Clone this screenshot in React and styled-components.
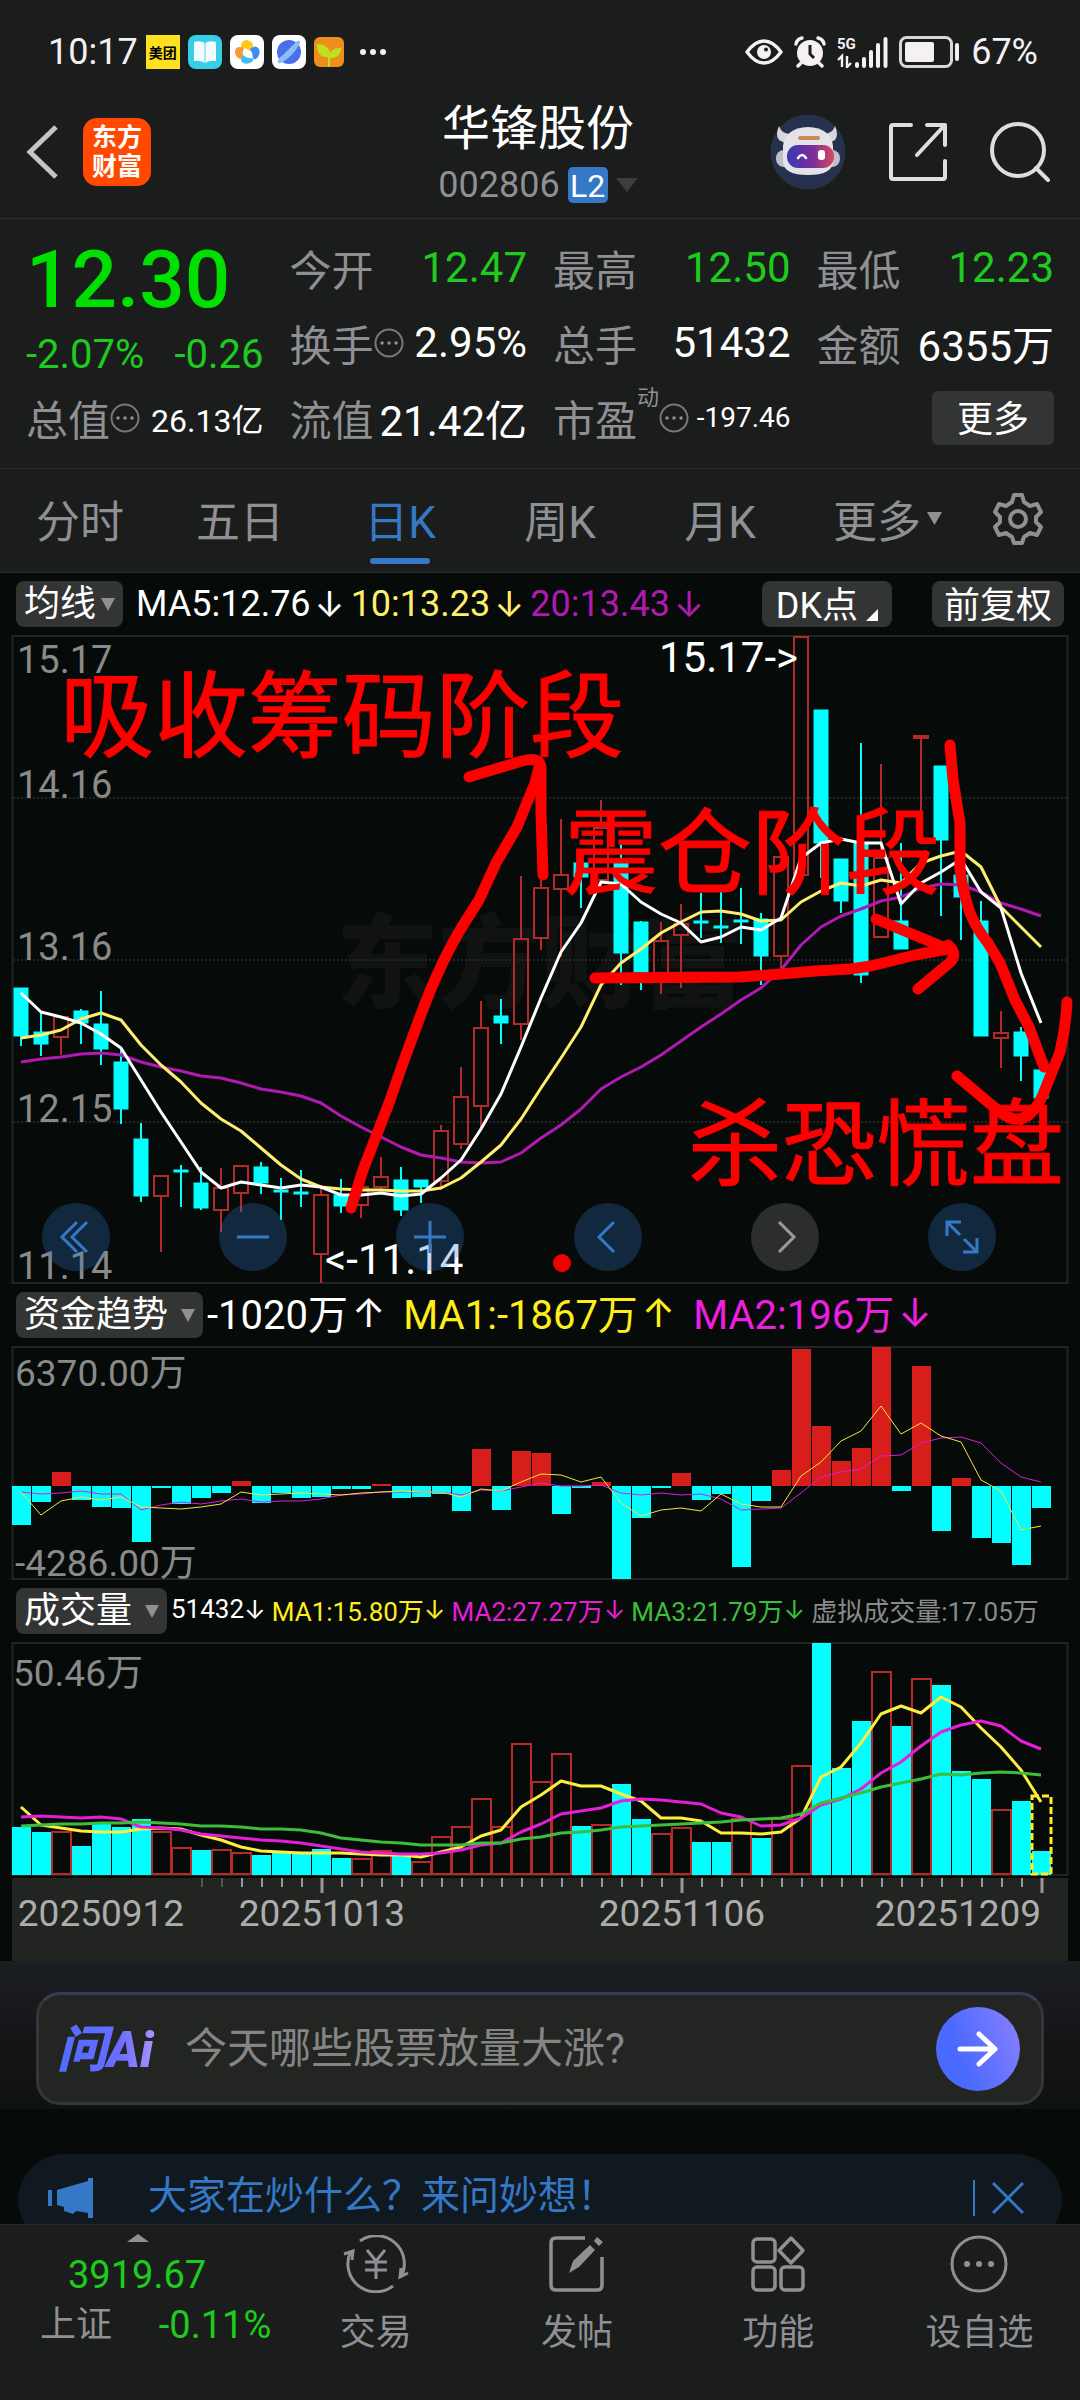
import React from "react";
import styled, { createGlobalStyle, css } from "styled-components";

const c = {
  panel: "#1a1d1b",
  black: "#060a08",
  line: "#2b2e2d",
  chip: "#333434",
  grey: "#8f8f94",
  axis: "#8a8a8a",
  blue: "#3478c6",
  green: "#1ecb1e",
  red: "#b22a2a",
  cyan: "#00ffff",
};

const GlobalStyle = createGlobalStyle`
  * { box-sizing: border-box; }
  body { margin: 0; background: ${c.black}; }
  body, button, input, select { font-family: Roboto, "Noto Sans CJK SC", sans-serif; }
  button, select, input { margin: 0; padding: 0; border: 0; background: none; color: inherit; }
  button { display: inline-flex; align-items: center; justify-content: center; cursor: pointer; }
  svg { display: block; flex: none; }
`;

const Page = styled.div`
  display: flex;
  flex-direction: column;
  height: 100vh;
  color: #fff;
  background: ${c.black};
  white-space: nowrap;
`;

const Content = styled.main`
  flex: 1;
  min-height: 0;
  overflow: hidden auto;
  scrollbar-width: none;
`;

/* ---------- status bar ---------- */

const StatusBar = styled.div`
  display: flex;
  align-items: center;
  justify-content: space-between;
  height: 88px;
  padding: 16px 42px 0 48px;
  font-size: 36px;
  background: ${c.panel};
  color: #f4f0f4;
`;

const StatusGroup = styled.div`
  display: flex;
  align-items: center;
  gap: ${(p) => p.$gap}px;
`;

const MeituanTile = styled.span`
  display: grid;
  place-items: center;
  width: 34px;
  height: 34px;
  background: #ffe01e;
  color: #000;
  font-size: 14px;
  font-weight: 700;
`;

/* ---------- title bar ---------- */

const TitleBar = styled.header`
  display: grid;
  grid-template-columns: 1fr auto 1fr;
  align-items: center;
  height: 131px;
  padding: 0 30px 2px 26px;
  background: ${c.panel};
  border-bottom: 1px solid ${c.line};
`;

const TitleSide = styled.div`
  display: flex;
  align-items: center;
  gap: ${(p) => p.$gap}px;
  justify-content: ${(p) => (p.$end ? "flex-end" : "flex-start")};
`;

const Brand = styled.span`
  display: grid;
  place-content: center;
  width: 68px;
  height: 68px;
  border-radius: 14px;
  background: #ff4800;
  font-size: 25px;
  line-height: 29px;
  font-weight: 700;
`;

const TitleText = styled.div`
  padding-top: 10px;
`;

const StockName = styled.h1`
  margin: 0;
  font-size: 48px;
  line-height: 56px;
  font-weight: 400;
  text-align: center;
`;

const StockCode = styled.div`
  display: flex;
  align-items: center;
  gap: 8px;
  height: 56px;
  font-size: 36px;
  color: ${c.grey};
`;

const Level = styled.span`
  display: grid;
  place-items: center;
  width: 40px;
  height: 36px;
  border-radius: 5px;
  background: ${c.blue};
  color: #fff;
  font-size: 32px;
`;

/* ---------- quote ---------- */

const Quote = styled.section`
  display: grid;
  grid-template-columns: repeat(4, 1fr);
  grid-auto-rows: 75px;
  column-gap: 26px;
  padding: 11px 26px 13px;
  background: ${c.panel};
  border-bottom: 1px solid ${c.line};
`;

const PriceCell = styled.div`
  grid-row: span 2;
  display: flex;
  flex-direction: column;
  color: ${c.green};
`;

const Price = styled.strong`
  height: 100px;
  font-size: 80px;
  line-height: 100px;
  font-weight: 500;
  color: #00e000;
`;

const Change = styled.div`
  display: flex;
  justify-content: space-between;
  font-size: 40px;
  line-height: 50px;
`;

const Stat = styled.div`
  display: flex;
  align-items: center;
  font-size: 42px;
  color: ${c.grey};
`;

const StatValue = styled.span`
  margin-left: auto;
  font-size: ${(p) => p.$size || 42}px;
  color: ${(p) => (p.$down ? c.green : "#fff")};
`;

const StatSup = styled.sup`
  align-self: flex-start;
  padding-top: 6px;
  font-size: 22px;
  line-height: 24px;
`;

const MoreButton = styled.button`
  align-self: center;
  justify-self: end;
  width: 122px;
  height: 54px;
  padding-bottom: 4px;
  border-radius: 6px;
  background: ${c.chip};
  font-size: 36px;
`;

/* ---------- period tabs ---------- */

const Tabs = styled.nav`
  display: grid;
  grid-template-columns: repeat(5, 32fr) 35fr 17fr 4fr;
  height: 104px;
  background: ${c.panel};
  border-bottom: 1px solid ${c.line};
`;

const Tab = styled.button`
  position: relative;
  gap: 6px;
  padding-bottom: 4px;
  font-size: 44px;
  color: ${c.grey};
  ${(p) =>
    p.$active &&
    css`
      color: ${c.blue};
      &::after {
        content: "";
        position: absolute;
        bottom: 8px;
        width: 60px;
        height: 6px;
        border-radius: 3px;
        background: ${c.blue};
      }
    `}
`;

/* ---------- chart legends ---------- */

const Legend = styled.div`
  display: flex;
  align-items: center;
  height: 62px;
  padding: 0 16px;
`;

const Readings = styled.div`
  display: flex;
  align-items: center;
  gap: ${(p) => p.$gap}px;
  padding-left: ${(p) => p.$lead}px;
  padding-bottom: ${(p) => p.$lift || 0}px;
  font-size: ${(p) => p.$size}px;
`;

const Picker = styled.label`
  display: flex;
  align-items: center;
  gap: ${(p) => p.$gap || 4}px;
  height: 46px;
  padding: 0 8px;
  border-radius: 8px;
  background: ${c.chip};

  select {
    appearance: none;
    font-size: 36px;
    color: #fff;
  }
`;

const Chips = styled.div`
  display: flex;
  gap: 40px;
  margin-left: auto;
`;

const Chip = styled.button`
  gap: 8px;
  height: 46px;
  padding: 0 ${(p) => p.$pad}px 4px;
  border-radius: 8px;
  background: ${c.chip};
  font-size: 36px;
  color: #fff;
`;

const Reading = styled.span`
  display: inline-flex;
  align-items: center;
  color: ${(p) => p.$color};
`;

const Arrow = styled.span`
  font-family: Inter, sans-serif;
  margin-left: ${(p) => p.$gap}px;
`;

/* ---------- charts ---------- */

const Chart = styled.svg`
  width: 100%;
  height: auto;
  font-family: Roboto, "Noto Sans CJK SC", sans-serif;
`;

const ChartWrap = styled.div`
  position: relative;
`;

const ChartTools = styled.div`
  position: absolute;
  left: 42px;
  right: 84px;
  bottom: 13px;
  display: flex;
  justify-content: space-between;
`;

const Tool = styled.button`
  width: 68px;
  height: 68px;
  border-radius: 50%;
  color: ${(p) => (p.$off ? "#9a9a9a" : c.blue)};
  background: ${(p) => (p.$off ? "rgba(140, 140, 140, 0.28)" : "rgba(50, 120, 210, 0.28)")};
`;

const Overlay = styled(Chart)`
  position: absolute;
  inset: 0;
  pointer-events: none;
`;

/* ---------- AI box and notice ---------- */

const AiSection = styled.section`
  padding: 31px 36px 4px;
  background: linear-gradient(#1b1f21, #17171c 40%, #141414 60%, #101111);
`;

const AiBox = styled.form`
  display: flex;
  align-items: center;
  gap: 24px;
  height: 113px;
  padding: 0 21px 0 18px;
  border: 3px solid #35363c;
  border-top-color: #3b3a58;
  border-radius: 24px;
  background: #232523;
`;

const AiLogo = styled.span`
  width: 104px;
  padding-bottom: 8px;
  font-size: 50px;
  font-weight: 900;
  font-style: italic;
  color: transparent;
  background: linear-gradient(90deg, #4d6dff, #6a6cff 60%, #b39cff);
  background-clip: text;
`;

const AiInput = styled.input`
  flex: 1;
  min-width: 0;
  height: 60px;
  font-size: 42px;
  outline: none;
  &::placeholder { color: #858585; opacity: 1; }
`;

const AiSend = styled.button`
  width: 84px;
  height: 84px;
  border-radius: 50%;
  background: linear-gradient(70deg, #4a69ff 30%, #8a80ff);
`;

const Notice = styled.aside`
  display: flex;
  align-items: center;
  height: 92px;
  margin: 45px 18px 0;
  padding: 0 38px 4px 30px;
  border-radius: 46px;
  background: #101820;
  color: ${c.blue};
  font-size: 39px;
`;

const NoticeLink = styled.a`
  margin-left: 54px;
  padding-bottom: 4px;
  line-height: 48px;
  color: inherit;
  text-decoration: none;
`;

const NoticeClose = styled.button`
  height: 36px;
  margin-left: auto;
  padding-left: 17px;
  border-left: 2px solid ${c.blue};
`;

/* ---------- bottom bar ---------- */

const BottomBar = styled.nav`
  display: grid;
  grid-template-columns: 275fr repeat(4, 201fr);
  height: 176px;
  background: ${c.panel};
  border-top: 1px solid #282b2a;
  color: ${c.grey};
`;

const IndexCell = styled.button`
  flex-direction: column;
  justify-content: flex-start;
  padding-top: 9px;
  font-size: 38px;
  line-height: 50px;
  color: ${c.green};
`;

const IndexLine = styled.span`
  display: flex;
  justify-content: space-between;
  width: 100%;
  padding: ${(p) => p.$pad};
`;

const IndexName = styled.span`
  font-size: 36px;
  color: ${c.grey};
`;

const NavItem = styled.button`
  flex-direction: column;
  justify-content: flex-start;
  gap: 14px;
  padding-top: 10px;
  font-size: 36px;
  line-height: 52px;
`;

/* ---------- small drawings ---------- */

const Caret = ({ w = 14, h = 13, color = "#8f8f94", up }) => (
  <svg width={w} height={h} viewBox="0 0 10 10" preserveAspectRatio="none">
    <path d={up ? "M0 10 5 0l5 10z" : "M0 0h10L5 10z"} fill={color} />
  </svg>
);

const Dots = () => (
  <svg width="30" height="30" viewBox="0 0 30 30">
    <circle cx="15" cy="15" r="13.5" fill="none" stroke="#77777b" strokeWidth="2" />
    <path d="M8 15h.1M15 15h.1M22 15h.1" stroke="#8f8f94" strokeWidth="3.4" strokeLinecap="round" />
  </svg>
);

const BookIcon = () => (
  <svg width="34" height="34" viewBox="0 0 34 34">
    <rect width="34" height="34" rx="8" fill="#36cfe6" />
    <path d="M6 7q6-2 11 1 5-3 11-1v19q-6-1-11 2-5-3-11-2z" fill="#f2fbff" />
    <path d="M17 8v20" stroke="#9adbe8" strokeWidth="1.5" />
  </svg>
);

const PinwheelIcon = () => (
  <svg width="34" height="34" viewBox="0 0 34 34">
    <rect width="34" height="34" rx="8" fill="#fff" />
    <path d="M11 14q-1-9 6-9 7 1 6 8-1 3-3 3-4-4-9-2z" fill="#ffc81e" />
    <path d="M14 13q-8-3-9 3 0 6 5 8 2 0 3-2-1-5 1-9z" fill="#f79a3c" />
    <path d="M13 20q-4 5 0 8 6 2 10-2 1-2-1-3-5 1-9-3z" fill="#3dc0f0" />
    <path d="M20 14q6-5 9 0 2 6-3 10-2 1-3-1 0-5-3-9z" fill="#3d8df0" />
  </svg>
);

const PlanetIcon = () => (
  <svg width="34" height="34" viewBox="0 0 34 34">
    <rect width="34" height="34" rx="8" fill="#fff" />
    <circle cx="17" cy="17" r="12" fill="#4a6fe6" />
    <path d="M6 28q-2-3 6-9 6-6 13-13 4-1 3 2-5 10-13 16-6 5-9 4z" fill="#8fbdf8" />
  </svg>
);

const SproutIcon = () => (
  <svg width="30" height="30" viewBox="0 0 30 30">
    <rect width="30" height="30" rx="6" fill="#ee8f1c" />
    <path d="M15 30V18M4 8q10 0 12 11Q4 21 4 8zM26 12q-9 0-10 8 9 1 10-8z" fill="#bfe01e" stroke="#bfe01e" strokeWidth="2" />
  </svg>
);

const More3 = () => (
  <svg width="36" height="8" viewBox="-8 0 36 8" fill="#f4f0f4">
    <circle cx="3" cy="4" r="3" /><circle cx="13" cy="4" r="3" /><circle cx="23" cy="4" r="3" />
  </svg>
);

const EyeIcon = () => (
  <svg width="38" height="26" viewBox="0 0 38 26">
    <path d="M2 13Q10 2 19 2t17 11q-8 11-17 11T2 13z" fill="none" stroke="#f4f0f4" strokeWidth="3.4" strokeLinejoin="round" />
    <circle cx="19" cy="13" r="7" fill="#f4f0f4" />
    <circle cx="21" cy="10.500" r="2" fill="#1a1d1b" />
  </svg>
);

const AlarmIcon = () => (
  <svg width="32" height="32" viewBox="0 0 32 32">
    <circle cx="16" cy="17" r="13" fill="#f4f0f4" />
    <path d="M2 8q1-5 6-6M30 8q-1-5-6-6M7 27l-3 3M25 27l3 3" stroke="#f4f0f4" strokeWidth="3.4" strokeLinecap="round" fill="none" />
    <path d="M16 9v9l4 4" stroke="#1a1d1b" strokeWidth="3" fill="none" />
  </svg>
);

const SignalIcon = () => (
  <svg width="51" height="32" viewBox="0 0 51 32">
    <text x="0" y="13" fontFamily="Roboto, sans-serif" fontWeight="700" fontSize="15" fill="#f4f0f4">5G</text>
    <path d="M1 24l4-4v11M10 20v11l4-4" stroke="#f4f0f4" strokeWidth="2.400" fill="none" />
    <path d="M20 28v2M27 23v7M34 16v14M41 9v21M48.500 3v27" stroke="#f4f0f4" strokeWidth="4" strokeLinecap="round" />
  </svg>
);

const BatteryIcon = () => (
  <svg width="61" height="32" viewBox="0 0 61 32">
    <rect x="1.500" y="1.500" width="51" height="29" rx="6" fill="none" stroke="#d8d6d8" strokeWidth="3" />
    <rect x="6" y="6" width="29" height="20" rx="2" fill="#f4f0f4" />
    <path d="M58 9v14" stroke="#f4f0f4" strokeWidth="4" strokeLinecap="round" />
  </svg>
);

const BackIcon = () => (
  <svg width="34" height="56" viewBox="0 0 34 56">
    <path d="M30 3 4 28l26 25" fill="none" stroke="#c4c4c4" strokeWidth="5" />
  </svg>
);

const RobotIcon = () => (
  <svg width="76" height="76" viewBox="0 0 76 76">
    <circle cx="38" cy="38" r="37.500" fill="#26324d" />
    <path d="M9 12q-4 9 0 14l8 4 6-10q-11 1-14-8zM65 12q4 9 0 14l-8 4-6-10q11 1 14-8z" fill="#d8d8dc" />
    <rect x="6" y="36" width="64" height="17" rx="8" fill="#bfc0ca" />
    <path d="M13 32q2-18 25-19 23 1 25 19v16q-1 13-25 13T13 48z" fill="#e4e4e8" />
    <path d="M30 24h18" stroke="#c98a5a" strokeWidth="4" strokeLinecap="round" />
    <linearGradient id="visor"><stop offset="0" stopColor="#3a37b0" /><stop offset=".55" stopColor="#7a2f9c" /><stop offset="1" stopColor="#d94a5c" /></linearGradient>
    <rect x="17" y="31" width="47" height="23" rx="11" fill="url(#visor)" />
    <path d="M28 44q4-6 8 0" fill="none" stroke="#fff" strokeWidth="2.500" strokeLinecap="round" />
    <rect x="48" y="36" width="7" height="10" rx="3" fill="#fff" />
  </svg>
);

const ShareIcon = () => (
  <svg width="58" height="58" viewBox="0 0 58 58" fill="none" stroke="#dedede" strokeWidth="4" strokeLinecap="round" strokeLinejoin="round">
    <path d="M22 2H4Q2 2 2 4v50q0 2 2 2h50q2 0 2-2V38M38 2h18v20M55 3 28 32" />
  </svg>
);

const SearchIcon = () => (
  <svg width="60" height="60" viewBox="0 0 60 60" fill="none" stroke="#dedede" strokeWidth="4" strokeLinecap="round">
    <circle cx="28" cy="28" r="26" />
    <path d="m46 46 12 12" />
  </svg>
);

const GearIcon = () => (
  <svg width="50" height="52" viewBox="0 0 50 52" fill="none" stroke="#8f8f94" strokeWidth="4" strokeLinejoin="round">
    <path d="M21 2h8l2 7 6 4 7-2 4 8-5 5v5l5 5-4 8-7-2-6 4-2 6h-8l-2-6-6-4-7 2-4-8 5-5v-5l-5-5 4-8 7 2 6-4z" />
    <circle cx="25" cy="26" r="8" />
  </svg>
);

const line = { fill: "none", stroke: "currentColor", strokeWidth: 3 };

const toolIcons = {
  快退: <svg width="34" height="36" viewBox="0 0 34 36" {...line}><path d="M18 3 3 18l15 15M28 3 13 18l15 15" /></svg>,
  缩小: <svg width="34" height="34" viewBox="0 0 34 34" {...line}><path d="M1 17h32" /></svg>,
  放大: <svg width="34" height="34" viewBox="0 0 34 34" {...line}><path d="M1 17h32M17 1v32" /></svg>,
  左移: <svg width="34" height="36" viewBox="0 0 34 36" {...line}><path d="M23 3 8 18l15 15" /></svg>,
  右移: <svg width="34" height="36" viewBox="0 0 34 36" {...line}><path d="m11 3 15 15-15 15" /></svg>,
  全屏: <svg width="34" height="34" viewBox="0 0 34 34" {...line}><path d="M16 2H2v14M2 2l13 13M18 32h14V18M32 32 19 19" /></svg>,
};

const MegaphoneIcon = () => (
  <svg width="46" height="40" viewBox="0 0 46 40" fill={c.blue}>
    <path d="M0 12h4v16H0zM9 12 40 3V0h5v40h-5v-5l-12-2-3 3-9-3v-4l-7-2z" />
  </svg>
);

const CloseIcon = () => (
  <svg width="32" height="32" viewBox="0 0 32 32" {...line}><path d="m1 1 30 30M31 1 1 31" /></svg>
);

const SendIcon = () => (
  <svg width="42" height="38" viewBox="0 0 42 38" fill="none" stroke="#fff" strokeWidth="5" strokeLinecap="round" strokeLinejoin="round">
    <path d="M3 19h35M22 4l16 15-16 15" />
  </svg>
);

const navItems = [
  ["交易", <svg width="66" height="58" viewBox="0 0 66 58" {...line}><path d="M17 6a28 28 0 0 1 41 36M50 51A28 28 0 0 1 8 16M1 19l9-3-1 9M65 38l-8 4 1-9" /><path d="m24 15 9 11 9-11M33 26v18M22 27h22M22 35h22" /></svg>],
  ["发帖", <svg width="56" height="58" viewBox="0 0 56 58" {...line} strokeWidth="3.500"><path d="M36 3H7Q2 3 2 8v42q0 5 5 5h41q5 0 5-5V22" /><path d="m20 38 4-12 17-16 5 5-16 17zM45 6l3-4 6 5-4 4z" fill="currentColor" stroke="none" /></svg>],
  ["功能", <svg width="54" height="58" viewBox="0 0 54 58" {...line} strokeWidth="3.500"><rect x="2" y="4" width="22" height="23" rx="4" /><rect x="2" y="32" width="22" height="23" rx="4" /><rect x="30" y="32" width="22" height="23" rx="4" /><path d="m40 3 12 12.500L40 28 28 15.500z" strokeLinejoin="round" /></svg>],
  ["设自选", <svg width="58" height="58" viewBox="0 0 58 58" {...line}><circle cx="29" cy="29" r="27" /><path d="M17 29h.1M29 29h.1M41 29h.1" strokeWidth="6" strokeLinecap="round" /></svg>],
];

/* ---------- chart data (chart units) ---------- */

const X = (i) => 21 + i * 20;
const pts = (a) => a.map((y, i) => `${X(i)},${y}`).join(" ");

// colour, body top, body bottom, high, low
const candles = [
  ["c", 988, 1036, 988, 1046], ["c", 1032, 1044, 1012, 1056], ["r", 1017, 1037, 1017, 1055], ["c", 1011, 1023, 1009, 1044],
  ["c", 1024, 1049, 991, 1065], ["c", 1062, 1109, 1048, 1124], ["c", 1139, 1196, 1123, 1202], ["r", 1176, 1196, 1176, 1252],
  ["c", 1170, 1172, 1165, 1207], ["c", 1183, 1208, 1167, 1210], ["r", 1188, 1210, 1168, 1232], ["r", 1166, 1193, 1166, 1212],
  ["c", 1167, 1183, 1162, 1194], ["c", 1190, 1192, 1178, 1220], ["c", 1192, 1194, 1170, 1207], ["r", 1195, 1254, 1185, 1283],
  ["c", 1195, 1206, 1179, 1213], ["r", 1187, 1205, 1187, 1218], ["r", 1177, 1187, 1157, 1191], ["c", 1180, 1210, 1167, 1216],
  ["c", 1180, 1187, 1180, 1203], ["r", 1131, 1181, 1125, 1190], ["r", 1097, 1144, 1067, 1149], ["r", 1028, 1106, 1001, 1128],
  ["c", 1016, 1023, 999, 1044], ["r", 939, 1024, 876, 1040], ["r", 888, 938, 872, 950], ["r", 875, 889, 819, 957],
  ["c", 863, 877, 858, 908], ["r", 828, 880, 800, 890], ["c", 862, 953, 843, 985], ["c", 922, 972, 921, 990],
  ["r", 941, 973, 922, 994], ["r", 924, 935, 904, 988], ["c", 921, 923, 893, 938], ["c", 926, 928, 891, 943],
  ["c", 920, 922, 888, 944], ["c", 919, 956, 913, 985], ["r", 857, 956, 857, 968], ["r", 637, 875, 637, 875],
  ["c", 710, 843, 710, 878], ["c", 859, 901, 859, 913], ["c", 843, 975, 743, 983], ["r", 858, 937, 764, 937],
  ["c", 921, 949, 843, 949], ["r", 736, 738, 736, 836], ["c", 766, 840, 766, 916], ["c", 875, 897, 875, 940],
  ["c", 921, 1036, 901, 1036], ["r", 1033, 1038, 1011, 1068], ["c", 1032, 1056, 1027, 1081], ["c", 1070, 1098, 1068, 1098],
];

const ma5 = [993, 1012, 1017, 1023, 1034, 1048, 1080, 1112, 1142, 1172, 1188, 1182, 1185, 1188, 1185, 1187, 1195, 1195, 1193, 1196, 1194, 1178, 1160, 1129, 1094, 1047, 998, 952, 923, 882, 884, 902, 914, 923, 942, 937, 927, 930, 918, 858, 843, 839, 843, 843, 904, 883, 872, 859, 892, 908, 973, 1023];
const ma10 = [1038, 1035, 1030, 1019, 1013, 1020, 1045, 1065, 1082, 1103, 1119, 1131, 1148, 1165, 1179, 1187, 1189, 1190, 1190, 1191, 1191, 1188, 1178, 1162, 1145, 1119, 1088, 1058, 1027, 985, 963, 949, 933, 922, 912, 911, 914, 921, 920, 902, 891, 883, 886, 880, 883, 863, 856, 851, 867, 907, 927, 947];
const ma20 = [1062, 1059, 1057, 1054, 1053, 1055, 1062, 1067, 1071, 1076, 1078, 1083, 1089, 1092, 1096, 1103, 1116, 1127, 1137, 1147, 1155, 1158, 1162, 1163, 1162, 1153, 1138, 1125, 1109, 1089, 1077, 1067, 1055, 1041, 1027, 1014, 1000, 988, 970, 945, 927, 916, 909, 901, 897, 888, 884, 885, 892, 903, 909, 916];

const fund = [1525, 1502, 1472, 1500, 1507, 1508, 1542, 1488, 1504, 1498, 1493, 1481, 1503, 1493, 1498, 1497, 1489, 1489, 1484, 1498, 1497, 1494, 1511, 1449, 1510, 1451, 1453, 1514, 1488, 1482, 1579, 1518, 1488, 1473, 1500, 1494, 1567, 1501, 1470, 1349, 1426, 1461, 1448, 1347, 1491, 1366, 1531, 1478, 1538, 1543, 1565, 1508];
const fund1 = [1492, 1515, 1501, 1497, 1500, 1497, 1507, 1508, 1509, 1507, 1504, 1492, 1495, 1494, 1493, 1494, 1495, 1493, 1492, 1491, 1492, 1492, 1497, 1489, 1491, 1482, 1474, 1475, 1482, 1477, 1503, 1516, 1510, 1508, 1511, 1494, 1504, 1507, 1507, 1476, 1462, 1441, 1431, 1406, 1434, 1423, 1436, 1442, 1480, 1491, 1530, 1526];
const fund2 = [1492, 1494, 1493, 1491, 1494, 1494, 1510, 1505, 1502, 1504, 1501, 1499, 1502, 1501, 1501, 1499, 1495, 1494, 1492, 1492, 1492, 1492, 1495, 1490, 1491, 1487, 1483, 1486, 1486, 1485, 1493, 1495, 1493, 1495, 1494, 1499, 1510, 1509, 1508, 1493, 1477, 1472, 1469, 1456, 1455, 1443, 1438, 1437, 1443, 1463, 1477, 1482];

const volKinds = "ccrccccrrcrrcccccrrcrrrrrrrrcrccrrccrcrrcccrcrcccrcc";
const vol = [1827, 1832, 1831, 1846, 1824, 1827, 1819, 1831, 1847, 1850, 1849, 1852, 1855, 1853, 1854, 1849, 1858, 1858, 1850, 1853, 1861, 1836, 1826, 1798, 1826, 1743, 1781, 1753, 1826, 1824, 1784, 1819, 1833, 1827, 1842, 1842, 1818, 1838, 1818, 1765, 1643, 1768, 1721, 1671, 1726, 1678, 1685, 1771, 1779, 1809, 1801, 1851];
const vol1 = [1807, 1825, 1828, 1831, 1832, 1832, 1829, 1828, 1829, 1835, 1840, 1847, 1851, 1852, 1853, 1853, 1853, 1854, 1855, 1855, 1857, 1852, 1847, 1836, 1830, 1807, 1795, 1781, 1786, 1786, 1794, 1801, 1818, 1818, 1821, 1833, 1833, 1834, 1832, 1818, 1777, 1767, 1743, 1714, 1706, 1713, 1697, 1707, 1728, 1747, 1770, 1802];
const vol2 = [1817, 1816, 1817, 1818, 1817, 1819, 1827, 1828, 1830, 1834, 1836, 1838, 1840, 1841, 1843, 1846, 1849, 1852, 1853, 1854, 1854, 1853, 1850, 1845, 1843, 1832, 1824, 1814, 1811, 1808, 1801, 1799, 1800, 1802, 1804, 1813, 1817, 1826, 1825, 1818, 1805, 1799, 1789, 1773, 1762, 1746, 1732, 1725, 1721, 1726, 1741, 1749];
const vol3 = [1826, 1825, 1824, 1824, 1823, 1823, 1822, 1823, 1824, 1826, 1826, 1827, 1829, 1829, 1830, 1833, 1838, 1840, 1842, 1843, 1845, 1845, 1845, 1843, 1843, 1839, 1837, 1833, 1832, 1830, 1827, 1826, 1825, 1824, 1823, 1822, 1820, 1819, 1818, 1814, 1803, 1798, 1793, 1787, 1783, 1779, 1774, 1775, 1773, 1772, 1773, 1775];

const Frame = ({ top, bottom }) => (
  <rect x="12.500" y={top} width="1055" height={bottom - top} fill="none" stroke="#232524" strokeWidth="2" />
);

const Trend = ({ data, color, w = 3 }) => (
  <polyline points={pts(data)} fill="none" stroke={color} strokeWidth={w} strokeLinejoin="round" />
);

const KLineChart = () => (
  <Chart viewBox="0 635 1080 649" role="img" aria-label="日K线">
    <text x="336" y="1000" fontSize="102" fontWeight="900" fill="#101311">东方财富</text>
    <Frame top={636} bottom={1283} />
    {[798, 960, 1122].map((y) => (
      <path key={y} d={`M13 ${y}H1067`} stroke="#232624" strokeWidth="2" strokeDasharray="2 2" />
    ))}
    {[["15.17", 673], ["14.16", 798], ["13.16", 960], ["12.15", 1122], ["11.14", 1279]].map(([t, y]) => (
      <text key={t} x="17" y={y} fontSize="38" fill={c.axis}>{t}</text>
    ))}
    {candles.map(([k, top, bottom, high, low], i) => {
      const color = k === "c" ? c.cyan : c.red;
      return (
        <g key={i} stroke={color} strokeWidth="2">
          <path d={`M${X(i)} ${high}V${top}M${X(i)} ${bottom}V${low}`} />
          <rect x={X(i) - 7} y={top} width="14" height={bottom - top} fill={k === "c" ? color : "none"} strokeWidth={k === "c" ? 1 : 2} />
        </g>
      );
    })}
    <Trend data={ma20} color="#b01ab0" />
    <Trend data={ma10} color="#ffee6e" />
    <Trend data={ma5} color="#fff" />
    <text x="798" y="672" fontSize="42" fill="#fff" textAnchor="end">15.17-&gt;</text>
    <text x="325" y="1274" fontSize="42" fill="#fff">&lt;-11.14</text>
    <circle cx="562" cy="1263" r="9" fill="#f20000" />
  </Chart>
);

const Annotations = () => (
  <Overlay viewBox="0 635 1080 649">
    <g fill="#f00" stroke="#f00" strokeWidth="1" fontSize="94">
      <text x="60" y="750">吸收筹码阶段</text>
      <text x="564" y="887">震仓阶段</text>
      <text x="688" y="1178">杀恐慌盘</text>
    </g>
    <g fill="none" stroke="#f00" strokeWidth="11" strokeLinecap="round" strokeLinejoin="round">
      <path d="M351 1208 363 1170 389 1103 403 1063 420 1017Q441 960 465 922L479 900 496 863 517 827 535 783 539 767" />
      <path d="M469 777 522 761Q540 756 541 768V813L543 875" />
      <path d="M595 978 740 977 781 974 815 971 850 969 871 966 915 955 948 949" />
      <path d="M876 919 948 949V945Q960 955 947 965L918 989" />
      <path d="M950 745 953 780 960 823V870Q963 892 969 910 975 927 988 943L1000 963 1015 1000 1029 1027 1044 1067" />
      <path d="M957 1076 1001 1113Q1015 1124 1029 1115 1040 1105 1046 1087L1060 1052Q1066 1025 1067 1002" />
    </g>
  </Overlay>
);

const FundChart = () => (
  <Chart viewBox="0 1346 1080 234" role="img" aria-label="资金趋势">
    <Frame top={1347} bottom={1579} />
    {fund.map((y, i) => (
      <rect key={i} x={X(i) - 9} y={Math.min(y, 1486)} width="19" height={Math.abs(y - 1486)} fill={y > 1486 ? c.cyan : "#d81e1a"} />
    ))}
    <Trend data={fund2} color="#d81ed8" w={1} />
    <Trend data={fund1} color="#f5e63c" w={1} />
    <text x="15" y="1386" fontSize="37" fill={c.axis}>6370.00万</text>
    <text x="15" y="1576" fontSize="37" fill={c.axis}>-4286.00万</text>
  </Chart>
);

const VolumeChart = () => (
  <Chart viewBox="0 1642 1080 319" role="img" aria-label="成交量">
    <Frame top={1643} bottom={1875} />
    <text x="13" y="1686" fontSize="37" fill={c.axis}>50.46万</text>
    {vol.map((y, i) =>
      volKinds[i] === "c" ? (
        <rect key={i} x={X(i) - 9} y={y} width="19" height={1875 - y} fill={c.cyan} />
      ) : (
        <rect key={i} x={X(i) - 9} y={y + 1} width="19" height={1873 - y} fill="none" stroke="#b82a2a" strokeWidth="2" />
      )
    )}
    <rect x="1032" y="1796" width="19" height="78" fill="none" stroke="#ffee1e" strokeWidth="3" strokeDasharray="7 3" />
    <Trend data={vol1} color="#ffee3c" />
    <Trend data={vol2} color="#e61ed8" />
    <Trend data={vol3} color="#3cbe3c" />
    <rect x="12" y="1878" width="1056" height="83" fill="#222422" />
    {vol.map((_, i) =>
      i < 9 ? null : (
        <path key={i} d={`M${X(i) + 1} 1878V${i % 18 === 15 ? 1893 : 1887}`} stroke={i < 11 ? "#555" : "#999"} strokeWidth={i % 18 === 15 ? 3 : 2} />
      )
    )}
    <g fontSize="37" fill="#adadad" textAnchor="middle">
      <text x="101" y="1926">20250912</text>
      <text x="322" y="1926">20251013</text>
      <text x="682" y="1926">20251106</text>
      <text x="958" y="1926">20251209</text>
    </g>
  </Chart>
);

const Value = ({ color, gap = 4, up, children }) => (
  <Reading $color={color}>
    {children}
    <Arrow $gap={gap}>{up ? "↑" : "↓"}</Arrow>
  </Reading>
);

const Pick = ({ label, gap, children }) => (
  <Picker $gap={gap}>
    <select aria-label={label}>
      <option>{children}</option>
    </select>
    <Caret />
  </Picker>
);

export default function App() {
  return (
    <Page>
      <GlobalStyle />
      <Content>
        <StatusBar>
          <StatusGroup $gap={8}>
            <span>10:17</span>
            <MeituanTile>美团</MeituanTile>
            <BookIcon />
            <PinwheelIcon />
            <PlanetIcon />
            <SproutIcon />
            <More3 />
          </StatusGroup>
          <StatusGroup $gap={11}>
            <EyeIcon />
            <AlarmIcon />
            <SignalIcon />
            <BatteryIcon />
            <span>67%</span>
          </StatusGroup>
        </StatusBar>

        <TitleBar>
          <TitleSide $gap={23}>
            <button aria-label="返回"><BackIcon /></button>
            <Brand>东方<br />财富</Brand>
          </TitleSide>
          <TitleText>
            <StockName>华锋股份</StockName>
            <StockCode>
              002806
              <Level>L2</Level>
              <Caret w={22} h={14} color="#3c3e3d" />
            </StockCode>
          </TitleText>
          <TitleSide $gap={43} $end>
            <button aria-label="助手"><RobotIcon /></button>
            <button aria-label="分享"><ShareIcon /></button>
            <button aria-label="搜索"><SearchIcon /></button>
          </TitleSide>
        </TitleBar>

        <Quote>
          <PriceCell>
            <Price>12.30</Price>
            <Change><span>-2.07%</span><span>-0.26</span></Change>
          </PriceCell>
          <Stat>今开<StatValue $down>12.47</StatValue></Stat>
          <Stat>最高<StatValue $down>12.50</StatValue></Stat>
          <Stat>最低<StatValue $down>12.23</StatValue></Stat>
          <Stat>换手<Dots /><StatValue>2.95%</StatValue></Stat>
          <Stat>总手<StatValue>51432</StatValue></Stat>
          <Stat>金额<StatValue>6355万</StatValue></Stat>
          <Stat>总值<Dots /><StatValue $size={32}>26.13亿</StatValue></Stat>
          <Stat>流值<StatValue>21.42亿</StatValue></Stat>
          <Stat>市盈<StatSup>动</StatSup><Dots /><StatValue $size={28}>-197.46</StatValue></Stat>
          <MoreButton>更多</MoreButton>
        </Quote>

        <Tabs>
          {["分时", "五日", "日K", "周K", "月K"].map((t) => (
            <Tab key={t} $active={t === "日K"}>{t}</Tab>
          ))}
          <Tab>更多<Caret w={15} h={13} /></Tab>
          <Tab aria-label="设置"><GearIcon /></Tab>
        </Tabs>

        <Legend>
          <Pick label="主图指标">均线</Pick>
          <Readings $size={36} $lead={13} $gap={6}>
            <Value color="#fff">MA5:12.76</Value>
            <Value color="#ffee6e">10:13.23</Value>
            <Value color="#b01ab0">20:13.43</Value>
          </Readings>
          <Chips>
            <Chip $pad={14}>
              DK点
              <svg width="12" height="40" viewBox="0 0 12 40"><path d="M12 27v12H0z" fill="#fff" /></svg>
            </Chip>
            <Chip $pad={12}>前复权</Chip>
          </Chips>
        </Legend>
        <ChartWrap>
          <KLineChart />
          <ChartTools>
            {Object.entries(toolIcons).map(([name, icon]) => (
              <Tool key={name} aria-label={name} $off={name === "右移"}>{icon}</Tool>
            ))}
          </ChartTools>
          <Annotations />
        </ChartWrap>

        <Legend>
          <Pick label="副图指标一" gap={12}>资金趋势</Pick>
          <Readings $size={40} $lead={4} $gap={18} $lift={6}>
            <Value color="#fff" up>-1020万</Value>
            <Value color="#ffee1e" up>MA1:-1867万</Value>
            <Value color="#f01ee0">MA2:196万</Value>
          </Readings>
        </Legend>
        <FundChart />

        <Legend>
          <Pick label="副图指标二" gap={12}>成交量</Pick>
          <Readings $size={26} $lead={4} $gap={6} $lift={4}>
            <Value color="#fff" gap={0}>51432</Value>
            <Value color="#ffee1e" gap={0}>MA1:15.80万</Value>
            <Value color="#e61ed8" gap={0}>MA2:27.27万</Value>
            <Value color="#3cbe3c" gap={0}>MA3:21.79万</Value>
            <Reading $color={c.axis}>虚拟成交量:17.05万</Reading>
          </Readings>
        </Legend>
        <VolumeChart />

        <AiSection>
          <AiBox onSubmit={(e) => e.preventDefault()}>
            <AiLogo>问Ai</AiLogo>
            <AiInput aria-label="问Ai" placeholder="今天哪些股票放量大涨?" />
            <AiSend aria-label="发送"><SendIcon /></AiSend>
          </AiBox>
        </AiSection>

        <Notice>
          <MegaphoneIcon />
          <NoticeLink href="#ask">大家在炒什么？来问妙想！</NoticeLink>
          <NoticeClose aria-label="关闭"><CloseIcon /></NoticeClose>
        </Notice>
      </Content>

      <BottomBar>
        <IndexCell>
          <Caret w={22} h={8} up />
          <IndexLine $pad="8px 0 0 68px">3919.67</IndexLine>
          <IndexLine $pad="0 4px 0 40px"><IndexName>上证</IndexName>-0.11%</IndexLine>
        </IndexCell>
        {navItems.map(([name, icon]) => (
          <NavItem key={name}>{icon}{name}</NavItem>
        ))}
      </BottomBar>
    </Page>
  );
}
